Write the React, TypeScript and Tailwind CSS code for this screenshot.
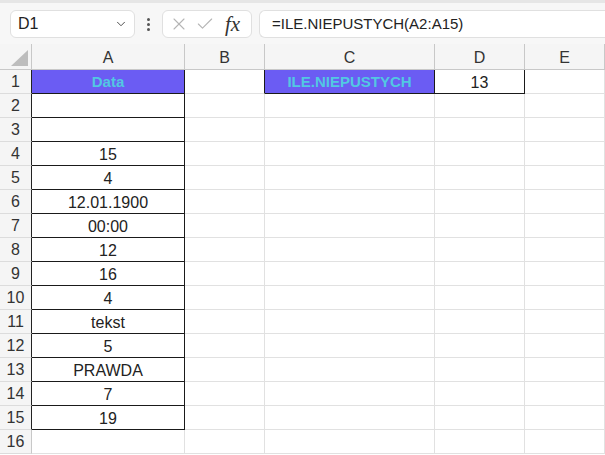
import { Check, ChevronDown, X } from "lucide-react";

const columns = [
  { key: "A", width: "w-[153px]" },
  { key: "B", width: "w-[80px]" },
  { key: "C", width: "w-[170px]" },
  { key: "D", width: "w-[90px]" },
  { key: "E", width: "flex-1" },
];

// values of A2:A15
const columnA = ["", "", "15", "4", "12.01.1900", "00:00", "12", "16", "4", "tekst", "5", "PRAWDA", "7", "19"];

type CellSpec = {
  text?: string;
  header?: boolean;
  rightDark?: boolean;
  bottomDark?: boolean;
};

function cellFor(row: number, col: string): CellSpec {
  if (row === 1) {
    if (col === "A") return { text: "Data", header: true, rightDark: true, bottomDark: true };
    if (col === "B") return { rightDark: true };
    if (col === "C") return { text: "ILE.NIEPUSTYCH", header: true, rightDark: true, bottomDark: true };
    if (col === "D") return { text: "13", rightDark: true, bottomDark: true };
    return {};
  }
  if (col === "A" && row <= 15) {
    return { text: columnA[row - 2], rightDark: true, bottomDark: true };
  }
  return {};
}

export default function App() {
  const rows = Array.from({ length: 16 }, (_, i) => i + 1);

  return (
    <div className="h-[455px] w-[605px] overflow-hidden bg-white text-[#222] [font-family:'Liberation_Sans',Arial,sans-serif]">
      <FormulaBar />

      {/* column headers */}
      <div className="flex h-[26px] bg-[#f5f5f5]">
        <div className="relative w-[32px] border-b border-r border-[#c8c8c8]">
          <svg className="absolute bottom-[3px] right-[3px]" width="17" height="16" viewBox="0 0 17 16">
            <polygon points="17,0 17,16 0,16" fill="#bdbdbd" />
          </svg>
        </div>
        {columns.map((c) => (
          <div
            key={c.key}
            className={`${c.width} flex items-center justify-center border-b border-r border-[#c8c8c8] pt-[3px] text-[16px] text-[#333]`}
          >
            {c.key}
          </div>
        ))}
      </div>

      {rows.map((row) => (
        <div key={row} className="flex h-[24px]">
          <div
            className={`flex w-[32px] items-center justify-center border-b border-r border-b-[#dcdcdc] bg-[#f5f5f5] pt-[1px] text-[16px] text-[#333] ${
              row <= 15 ? "border-r-[#222]" : "border-r-[#c8c8c8]"
            }`}
          >
            {row}
          </div>
          {columns.map((c) => {
            const cell = cellFor(row, c.key);
            return (
              <div
                key={c.key}
                className={`${c.width} flex items-center justify-center border-b border-r pt-[2px] ${
                  cell.header ? "text-[15px]" : "text-[16px]"
                } ${cell.rightDark ? "border-r-[#1a1a1a]" : "border-r-[#e1e1e1]"} ${
                  cell.bottomDark ? "border-b-[#1a1a1a]" : "border-b-[#e1e1e1]"
                } ${cell.header ? "bg-[#6b5cf3] font-bold text-[#52c8e2]" : ""}`}
              >
                {cell.text}
              </div>
            );
          })}
        </div>
      ))}
    </div>
  );
}

function FormulaBar() {
  return (
    <div className="flex h-[44px] items-start border-t-[3px] border-[#e6e6e6] bg-[#f7f7f7] pt-[7px]">
      <div className="ml-[10px] flex h-[28px] w-[125px] items-center justify-between rounded-[6px] border border-[#e0e0e0] bg-white pl-[7px] pr-[6px] text-[16px] text-[#222]">
        <span>D1</span>
        <ChevronDown className="h-[14px] w-[14px] text-[#444]" strokeWidth={1.6} />
      </div>

      <div className="flex h-[28px] w-[27px] flex-col items-center justify-center gap-[2px]">
        <span className="h-[3px] w-[3px] rounded-full bg-[#555]" />
        <span className="h-[3px] w-[3px] rounded-full bg-[#555]" />
        <span className="h-[3px] w-[3px] rounded-full bg-[#555]" />
      </div>

      <div className="flex h-[28px] w-[90px] items-center rounded-[6px] border border-[#e0e0e0] bg-white pl-[6px]">
        <X className="h-[20px] w-[20px] text-[#b5b5b5]" strokeWidth={1.3} />
        <Check className="ml-[6px] h-[20px] w-[20px] text-[#b5b5b5]" strokeWidth={1.3} />
        <span className="ml-[10px] text-[21px] italic leading-none text-[#333] [font-family:'Liberation_Serif',serif]">
          fx
        </span>
      </div>

      <div className="ml-[7px] flex h-[28px] flex-1 items-center rounded-l-[6px] border border-r-0 border-[#e0e0e0] bg-white pl-[12px] text-[15px] text-[#222]">
        =ILE.NIEPUSTYCH(A2:A15)
      </div>
    </div>
  );
}
